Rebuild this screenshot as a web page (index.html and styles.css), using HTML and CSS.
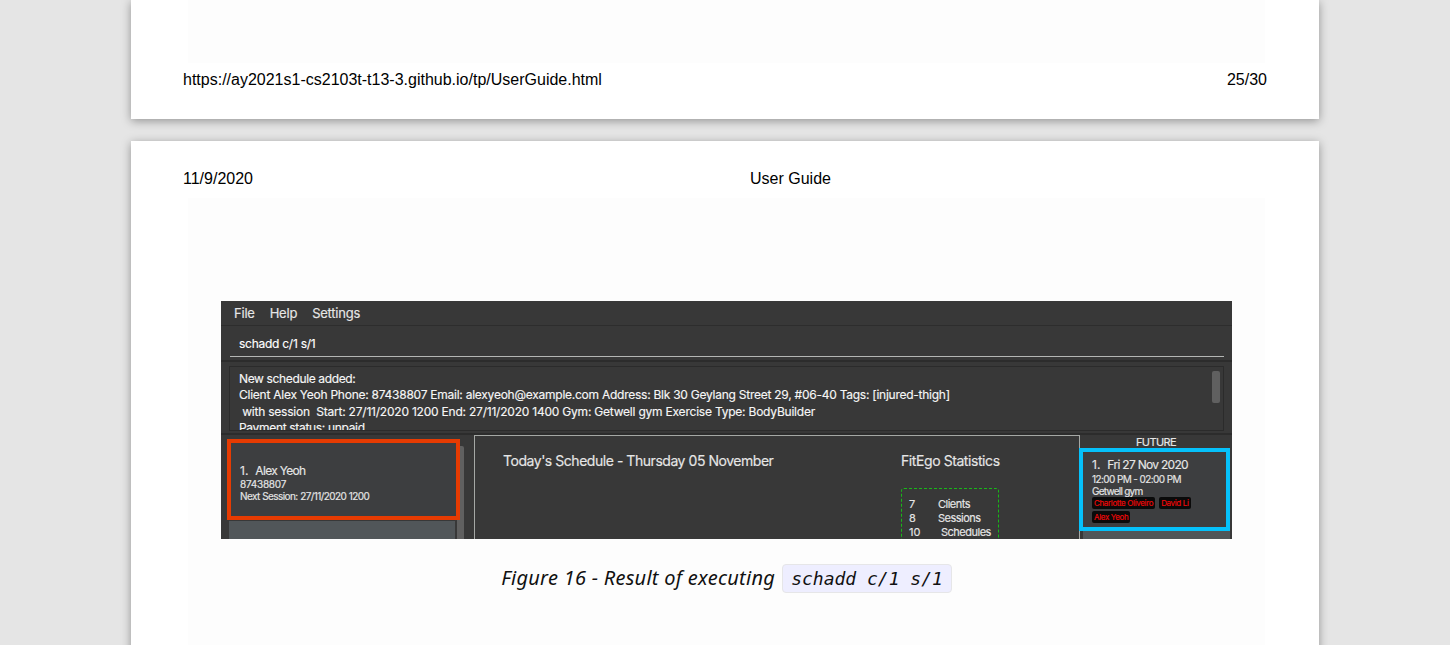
FILE: index.html
```html
<!DOCTYPE html>
<html lang="en">
<head>
<meta charset="utf-8">
<title>User Guide</title>
<link rel="stylesheet" href="styles.css">
</head>
<body>
<main class="viewer">
  <section class="page page-prev">
    <div class="page-body"></div>
    <footer class="page-line"><span class="url">https://ay2021s1-cs2103t-t13-3.github.io/tp/UserGuide.html</span><span>25/30</span></footer>
  </section>
  <section class="page page-current">
    <header class="page-line page-head"><span>11/9/2020</span><span class="doc-title">User Guide</span></header>
    <div class="page-body">
      <figure class="figure">
        <div class="app">
          <nav class="menu"><span>File</span><span>Help</span><span>Settings</span></nav>
          <div class="command"><div class="command-field"><span>schadd c/1 s/1</span></div></div>
          <div class="result">
            <div class="result-box">
              <div class="result-text">
                <p class="r1">New schedule added:</p>
                <p class="r2">Client Alex Yeoh Phone: 87438807 Email: alexyeoh@example.com Address: Blk 30 Geylang Street 29, #06-40 Tags: [injured-thigh]</p>
                <p class="r3"> with session  Start: 27/11/2020 1200 End: 27/11/2020 1400 Gym: Getwell gym Exercise Type: BodyBuilder</p>
                <p class="r4">Payment status: unpaid</p>
              </div>
              <div class="thumb"></div>
            </div>
          </div>
          <div class="panels">
            <aside class="clients">
              <div class="client-list">
                <div class="card card-red">
                  <p class="name"><span>1.</span><span>Alex Yeoh</span></p>
                  <p class="phone">87438807</p>
                  <p class="next">Next Session: 27/11/2020 1200</p>
                </div>
                <div class="card-next"></div>
              </div>
              <div class="client-scroll"></div>
            </aside>
            <section class="today">
              <h2 class="schedule-title">Today's Schedule - Thursday 05 November</h2>
              <div class="stats">
                <h2>FitEgo Statistics</h2>
                <div class="stats-box">
                  <p><span class="num">7</span><span>Clients</span></p>
                  <p><span class="num">8</span><span>Sessions</span></p>
                  <p><span class="num num-wide">10</span><span>Schedules</span></p>
                </div>
              </div>
            </section>
            <aside class="future">
              <h3>FUTURE</h3>
              <div class="card-blue">
                <p class="date"><span>1.</span><span>Fri 27 Nov 2020</span></p>
                <p class="time">12:00 PM - 02:00 PM</p>
                <p class="gym">Getwell gym</p>
                <div class="tags"><span>Charlotte Oliveiro</span><span>David Li</span><span>Alex Yeoh</span></div>
              </div>
              <div class="future-next"></div>
            </aside>
          </div>
        </div>
        <figcaption><span class="cap">Figure 16 - Result of executing</span><code>schadd c/1 s/1</code></figcaption>
      </figure>
    </div>
  </section>
</main>
</body>
</html>
```

FILE: styles.css
```css
* { box-sizing: border-box; margin: 0; padding: 0; }
html, body { height: 645px; overflow: hidden; }
body { background: #e5e5e5; }
.viewer { height: 645px; display: flex; flex-direction: column; align-items: center; gap: 22px; overflow: hidden; }
.page { width: 1188px; background: #fff; box-shadow: 0 2px 9px rgba(0,0,0,.36); flex: none; }
.page-prev { height: 119px; }
.page-prev .page-body { height: 63px; }
.page-body { margin: 0 54px 0 57px; background: #fdfdfd; }
.page-line { display: flex; justify-content: space-between; padding: 0 52px; height: 34px; font: 16px/34px "Liberation Sans", Arial, sans-serif; color: #000; }
.page-current { height: 540px; }
.page-head { height: 57px; padding-top: 21px; justify-content: flex-start; }
.doc-title { margin-left: 497px; }
.page-current .page-body { height: 483px; padding: 103px 33px 0; }

.app { width: 1011px; height: 238px; overflow: hidden; background: #383838; color: #e6e6e6; font: 13px/16px Inter, sans-serif; display: flex; flex-direction: column; -webkit-text-stroke: .15px currentColor; }
.app span, .app p { white-space: pre; }
.menu { height: 25px; border-bottom: 1px solid #2d2d2d; display: flex; padding-left: 13px; gap: 15px; line-height: 25px; font-size: 13px; letter-spacing: -.22px; }
.command { height: 36px; border-bottom: 2px solid #2c2c2c; padding: 0 8px 0 9px; }
.command-field { height: 31px; border-bottom: 1px solid #b4b6b4; padding: 9px 9px 0; font-size: 12px; line-height: 17px; letter-spacing: -.26px; color: #fff; }
.result { height: 73px; padding: 4px 8px 4px; border-bottom: 2px solid #2c2c2c; }
.result-box { height: 65px; border: 1px solid #2b2b2b; display: flex; justify-content: space-between; padding: 4px 3px 0 9px; }
.result-text { height: 59px; overflow: hidden; color: #f6f6f6; font-size: 12px; line-height: 16.3px; }
.r1 { letter-spacing: -.36px; }
.r2 { letter-spacing: -.25px; }
.r3 { letter-spacing: -.215px; }
.r4 { letter-spacing: -.32px; }
.thumb { width: 8px; height: 32px; border-radius: 2px; background: #606060; flex: none; }
.panels { height: 104px; display: flex; flex: none; }
.clients { width: 253px; display: flex; padding: 5px 0 0 6px; }
.client-list { width: 230px; flex: none; }
.card-red { width: 233px; height: 81px; border: 4px solid #e63b02; background: #3d3e40; padding: 19px 0 0 9px; margin-top: -1px; position: relative; }
.name { display: flex; gap: 7px; font-size: 12px; line-height: 17px; letter-spacing: -.7px; }
.name span:first-child, .date span:first-child { letter-spacing: 0; }
.phone { font-size: 10px; line-height: 11px; letter-spacing: -.25px; }
.next { font-size: 10px; line-height: 13px; letter-spacing: -.58px; word-spacing: .3px; }
.card-next { margin: 1px 2px 0; height: 20px; background: #515659; }
.client-scroll { width: 7px; height: 100px; margin-top: 6px; background: #606060; border-radius: 2px; }
.today { width: 606px; border: solid #a5a8a5; border-width: 1px 1px 0; display: flex; }
.today h2 { font-size: 14px; font-weight: 400; line-height: 20px; letter-spacing: -.42px; }
.today .schedule-title { margin: 15px 0 0 28px; width: 398px; letter-spacing: -.46px; }
.stats { padding-top: 15px; }
.stats-box { margin-top: 17px; width: 98px; height: 80px; border: 1px dashed #18b818; border-radius: 3px; padding: 8px 0 0 7px; font-size: 11px; line-height: 14px; letter-spacing: -.5px; }
.stats-box p { display: flex; }
.num { width: 29px; letter-spacing: 0; }
.num-wide { width: 32px; }
.future { width: 152px; }
.future h3 { height: 13px; font-size: 11px; line-height: 15px; font-weight: 400; text-align: center; letter-spacing: -.6px; }
.card-blue { margin-left: -1px; width: 151px; height: 83px; border: 4px solid #05c1fb; background: #3d3e40; padding: 4px 0 0 9px; position: relative; }
.date { display: flex; gap: 7px; font-size: 12px; line-height: 17px; letter-spacing: -.7px; }
.time { font-size: 10px; line-height: 12px; letter-spacing: -.6px; }
.gym { font-size: 10px; line-height: 12px; letter-spacing: -.75px; }
.tags { display: flex; flex-wrap: wrap; gap: 2px 4px; font-size: 8px; line-height: 12px; color: #f00808; width: 120px; letter-spacing: -.35px; }
.tags span { background: #0a0a0a; border-radius: 2px; height: 12px; padding: 0 2px; }
.future-next { height: 12px; margin: 0 2px 0 3px; background: #515659; }

figcaption { display: flex; justify-content: center; align-items: center; height: 30px; margin-top: 24px; gap: 7px; font: italic 20px/30px "Noto Sans", sans-serif; color: #111; }
.cap { letter-spacing: .27px; }
code { height: 29px; border: 1px solid #e6e6e8; border-radius: 4px; background: #eef; padding: 0 8px; font: italic 18px/27px "DejaVu Sans Mono", monospace; }
```
